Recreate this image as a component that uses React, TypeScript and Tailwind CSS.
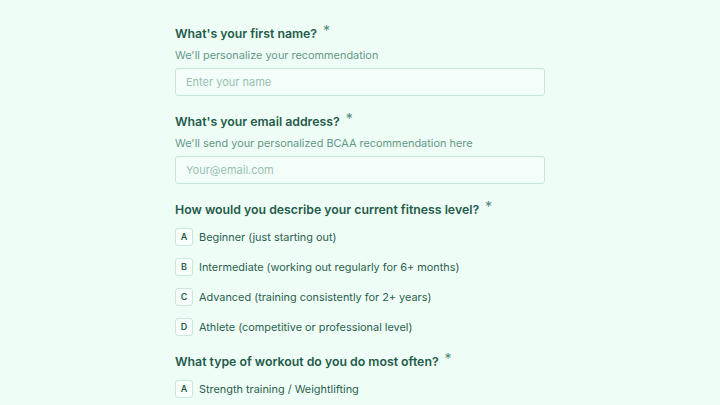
import React from 'react'

type Question = {
  title: string
  hint?: string
  placeholder?: string
  options?: string[]
}

const questions: Question[] = [
  { title: "What's your first name?", hint: "We'll personalize your recommendation", placeholder: 'Enter your name' },
  {
    title: "What's your email address?",
    hint: "We'll send your personalized BCAA recommendation here",
    placeholder: 'Your@email.com',
  },
  {
    title: 'How would you describe your current fitness level?',
    options: [
      'Beginner (just starting out)',
      'Intermediate (working out regularly for 6+ months)',
      'Advanced (training consistently for 2+ years)',
      'Athlete (competitive or professional level)',
    ],
  },
  {
    title: 'What type of workout do you do most often?',
    options: ['Strength training / Weightlifting', 'Cardio / Endurance', 'HIIT / CrossFit'],
  },
]

const letters = ['A', 'B', 'C', 'D', 'E']

function Title({ text }: { text: string }) {
  return (
    <h2 className="flex items-start text-[12.3px] leading-5 font-semibold text-[#1f5b4a]">
      {text}
      <span className="ml-[6px] -mt-[3px] text-[14px] font-normal text-[#4f8a76]">*</span>
    </h2>
  )
}

export default function App() {
  return (
    <div
      className="h-[405px] w-[720px] overflow-hidden bg-[#effdf7]"
      style={{ fontFamily: 'Inter, "Noto Sans", sans-serif' }}
    >
      <form className="mx-auto flex w-[370px] flex-col pt-[24px]">
        {questions.map((q, i) => (
          <div key={i} className="mb-[16px] flex flex-col">
            <Title text={q.title} />
            {q.hint && <p className="mt-[1px] text-[10.9px] leading-5 text-[#659887]">{q.hint}</p>}
            {q.placeholder && (
              <input
                className="mt-[3px] h-[28px] w-full rounded-[3px] border border-[#c6e6d8] bg-[#f3fefa] px-[10px] text-[11px] text-[#1d5a47] placeholder:text-[#98bfb1] focus:outline-none"
                placeholder={q.placeholder}
              />
            )}
            {q.options && (
              <div className="mt-[8px] flex flex-col gap-[12px]">
                {q.options.map((o, j) => (
                  <label key={j} className="flex items-center gap-[6px]">
                    <span className="flex h-[18px] w-[18px] items-center justify-center rounded-[3px] border border-[#cbe8db] bg-[#f8fffc] text-[9px] font-semibold text-[#2a5c4c]">
                      {letters[j]}
                    </span>
                    <span className="text-[10.9px] leading-[18px] text-[#2b5f4f]">{o}</span>
                  </label>
                ))}
              </div>
            )}
          </div>
        ))}
      </form>
    </div>
  )
}
